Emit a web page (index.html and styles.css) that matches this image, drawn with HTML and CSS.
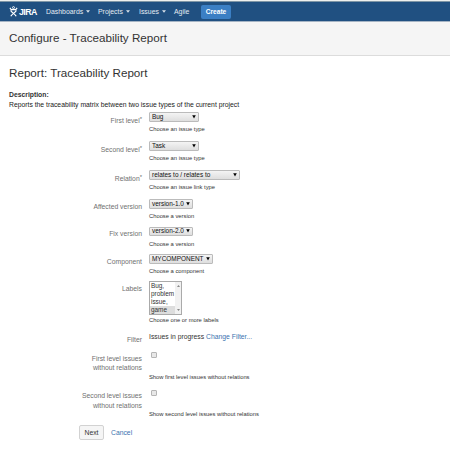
FILE: index.html
```html
<!DOCTYPE html>
<html lang="en">
<head>
<meta charset="utf-8">
<title>Configure - Traceability Report</title>
<link rel="stylesheet" href="styles.css">
</head>
<body>
<header class="nav">
  <div class="logo">
    <svg width="9" height="11" viewBox="0 0 9 11" fill="none" stroke="#fff" stroke-width="1.2"><circle cx="4.5" cy="1.6" r="1" stroke-width=".9"/><path d="M.9 1.9 2.2 3.6h4.6l1.3-1.7M1.7 4.3c.5 2.1 4.6 3.5 5.5 6M7.3 4.3c-.5 2.1-4.6 3.5-5.5 6"/></svg>
    <span class="brand">JIRA</span>
  </div>
  <a class="n-dash">Dashboards<svg class="caret" width="4" height="3" viewBox="0 0 4 3"><path d="M0 .3h4L2 2.7z" fill="#d7e0ea"/></svg></a>
  <a class="n-proj">Projects<svg class="caret" width="4" height="3" viewBox="0 0 4 3"><path d="M0 .3h4L2 2.7z" fill="#d7e0ea"/></svg></a>
  <a class="n-iss">Issues<svg class="caret" width="4" height="3" viewBox="0 0 4 3"><path d="M0 .3h4L2 2.7z" fill="#d7e0ea"/></svg></a>
  <a class="n-agile">Agile</a>
  <button class="create">Create</button>
</header>
<div class="page-head"><h1>Configure - Traceability Report</h1></div>
<main>
  <h2>Report: Traceability Report</h2>
  <div class="description"><b>Description:</b><p>Reports the traceability matrix between two issue types of the current project</p></div>
  <form>
    <div class="row tall"><label>First level<sup>*</sup></label><div><div class="select w50"><span>Bug</span><svg width="4" height="4" viewBox="0 0 4 4"><path d="M.2.3h3.6L2 3.4z"/></svg></div><p class="hint">Choose an issue type</p></div></div>
    <div class="row tall"><label>Second level<sup>*</sup></label><div><div class="select w50"><span>Task</span><svg width="4" height="4" viewBox="0 0 4 4"><path d="M.2.3h3.6L2 3.4z"/></svg></div><p class="hint">Choose an issue type</p></div></div>
    <div class="row tall"><label>Relation<sup>*</sup></label><div><div class="select w91"><span>relates to / relates to</span><svg width="4" height="4" viewBox="0 0 4 4"><path d="M.2.3h3.6L2 3.4z"/></svg></div><p class="hint">Choose an issue link type</p></div></div>
    <div class="row"><label>Affected version</label><div><div class="select w44"><span>version-1.0</span><svg width="4" height="4" viewBox="0 0 4 4"><path d="M.2.3h3.6L2 3.4z"/></svg></div><p class="hint">Choose a version</p></div></div>
    <div class="row"><label>Fix version</label><div><div class="select w44"><span>version-2.0</span><svg width="4" height="4" viewBox="0 0 4 4"><path d="M.2.3h3.6L2 3.4z"/></svg></div><p class="hint">Choose a version</p></div></div>
    <div class="row last-select"><label>Component</label><div><div class="select w64"><span>MYCOMPONENT</span><svg width="4" height="4" viewBox="0 0 4 4"><path d="M.2.3h3.6L2 3.4z"/></svg></div><p class="hint">Choose a component</p></div></div>
    <div class="row labels"><label>Labels</label><div><div class="listbox"><ul><li>Bug,</li><li>problem</li><li>issue,</li><li class="selected">game</li></ul><div class="scroll"><svg width="3" height="2" viewBox="0 0 3 2"><path d="M0 2h3L1.5 0z"/></svg><svg width="3" height="2" viewBox="0 0 3 2"><path d="M0 0h3L1.5 2z"/></svg></div></div><p class="hint">Choose one or more labels</p></div></div>
    <div class="row filter"><label>Filter</label><div class="filter-value">Issues in progress <a>Change Filter...</a></div></div>
    <div class="row check"><label>First level issues<br>without relations</label><div><span class="box"></span><p class="hint">Show first level issues without relations</p></div></div>
    <div class="row check"><label>Second level issues<br>without relations</label><div><span class="box"></span><p class="hint">Show second level issues without relations</p></div></div>
    <div class="actions"><button type="button" class="next">Next</button><a>Cancel</a></div>
  </form>
</main>
</body>
</html>
```

FILE: styles.css
```css
* { box-sizing: border-box; }
body { margin: 0; background: #fff; color: #333; font: 6.8px/10px "Liberation Sans", Arial, sans-serif; white-space: nowrap; }
h1, h2, p, ul { margin: 0; padding: 0; font-weight: normal; }
ul { list-style: none; }
a { color: #3b73af; }
button { padding: 0; font-family: inherit; }

.nav { display: flex; align-items: center; height: 22px; padding: 1px 0 0 9px; background: #205081; border-top: 1px solid #eef0ee; border-bottom: 1px solid #a5b4c4; box-shadow: inset 0 1px #7f96a6; }
.nav a { color: #e4ebf2; font-size: 6.9px; }
.logo { display: flex; align-items: center; gap: 1px; width: 37px; height: 12px; }
.brand { color: #fff; font: bold 8.8px/12px "Liberation Sans", sans-serif; letter-spacing: -.6px; }
.caret { margin-left: 3px; vertical-align: 1px; }
.n-dash { width: 52px; }
.n-proj { width: 41px; }
.n-iss { width: 35px; }
.n-agile { width: 27px; }
.create { width: 30px; height: 14px; border: 0; border-radius: 2px; background: #3b7fc4; color: #fff; font-size: 6.6px; font-weight: bold; line-height: 14px; }

.page-head { height: 34px; padding: 7px 9px 0; background: #f5f5f5; border-bottom: 1px solid #dcdcdc; }
h1, h2 { font-size: 11.65px; line-height: 18px; }
main { padding: 8px 9px 0; }
.description { margin-top: 8px; color: #222; line-height: 10px; }
.description b { display: block; color: #333; }

form { padding-top: 2px; }
.row { display: grid; grid-template-columns: 133px 1fr; column-gap: 7px; height: 27.5px; }
.tall { height: 29px; }
.row label { padding-top: 2.6px; color: #707070; text-align: right; }
.tall label { padding-top: 4px; }
sup { font-size: 6px; line-height: 0; vertical-align: 2.5px; }
.select { display: flex; align-items: center; justify-content: space-between; height: 9.5px; padding: 0 2.5px 0 2px; border: 1px solid #bbb; border-radius: 1px; background: linear-gradient(#f4f4f4, #dedede); color: #111; font-size: 6.45px; line-height: 8px; }
.w50 { width: 50px; }
.w91 { width: 91px; }
.w44 { width: 44px; }
.w64 { width: 64px; }
.hint { margin-top: 3.5px; color: #333; font-size: 5.8px; line-height: 8px; }
.last-select { height: 27px; }

.labels { height: 50px; }
.listbox { display: flex; width: 33px; height: 34px; border: 1px solid #aaa; }
.listbox ul { flex: 1; overflow: hidden; }
.listbox li { height: 8px; padding-left: 1px; font-size: 6.4px; line-height: 8px; }
.selected { background: #ddd; }
.scroll { display: flex; flex-direction: column; justify-content: space-between; align-items: center; width: 6px; padding: 3px 0; background: #f1f1f1; fill: #888; }
.labels .hint { margin-top: 1px; }

.filter { height: 21px; }
.filter label { padding-top: 4px; }
.filter-value { padding-top: .6px; }
.check { height: 37.5px; }
.check label { padding-top: 1.5px; line-height: 9.7px; }
.box { display: block; width: 6px; height: 6px; margin-left: 2px; border: 1px solid #b5b5b5; border-radius: 1px; background: #e8e8e8; }
.check .hint { margin-top: 14.5px; }
.actions { display: flex; align-items: center; gap: 7px; margin: -2px 0 0 70px; }
.next { width: 25px; height: 15px; border: 1px solid #d2d2d2; border-radius: 2px; background: #f5f5f5; color: #333; font-size: 6.8px; }
```
